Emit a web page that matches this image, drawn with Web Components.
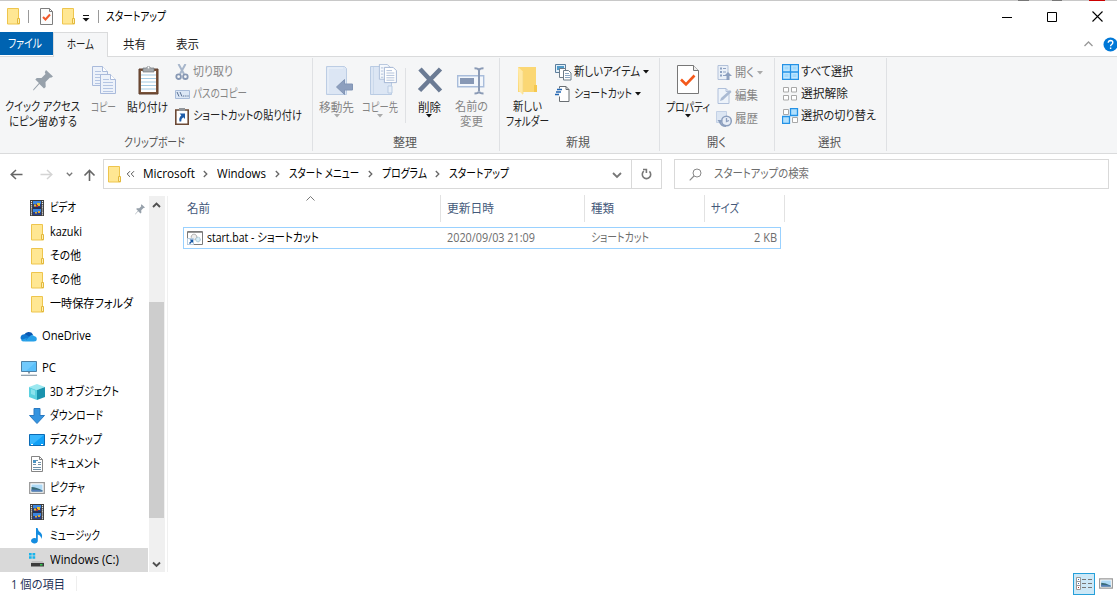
<!DOCTYPE html>
<html lang="ja">
<head>
<meta charset="utf-8">
<title>スタートアップ</title>
<style>
html,body{margin:0;height:100%;overflow:hidden;background:#fff}
body{font:12px "Open Sans","Noto Sans CJK JP",sans-serif;color:#000}
</style>
</head>
<body>
<explorer-window></explorer-window>
<script>
const folder='<path d="M1.500.500h11v11.500h1v4h-12z" fill="#ffe793" stroke="#eec54d"/><path d="M11.500 10.500h2v5h-2z" fill="#fff0b0" stroke="#e3b83c"/>';
const video='<path d="M1 0h14v16H1z" fill="#3a3a3a"/><path d="M4 1h8v14H4z" fill="#27408c"/><path d="M4 1h8v3H4z" fill="#3a86e0"/><path d="M5 4.500h2v2H5zM8 3h3v3H8z" fill="#e6bd2c"/><path d="M7 5h2v2H7z" fill="#b5322c"/><path d="M4 9h8v3H4z" fill="#3a86e0"/><path d="M6 12h2v1.500H6zM9 11h2v2H9z" fill="#d9a93a"/><path d="M4 8h8" stroke="#222"/><path d="M2.500 1v15M13.500 1v15" stroke="#eee" stroke-width="1.200" stroke-dasharray="1.200 .9"/>';
const pin='<path d="M13 0l7 6.500-2 1.200-1-.3-4.500 4.600.2 5-1.700 1.400-4.600-4.300L1 20 0 20.500l.4-1.200 5.500-6.300L2.300 9.500l1.500-1.400 4.700-.1L12.500 4l-.7-1.800z" fill="#97a1ab"/>';
const caret='<path d="M0 0h6L3 3.500z" fill="currentColor"/>';
const sheet=(x,y)=>`<g transform="translate(${x} ${y})"><path d="M.5.500h10l5 5v14H.5z" fill="#edf2fa" stroke="#a9badb"/><path d="M10.500.500v5h5" fill="#fff" stroke="#a9badb"/><path d="M3 5.500h6M3 8.500h10M3 11.500h10M3 14.500h10M3 17.500h10" stroke="#b4c5e3"/></g>`;
/* name: [width, height, markup] */
const ICONS={
folder:[14,17,folder],
video:[16,16,video],
pin:[20,21,pin],
caret:[6,4,caret],
propsmall:[13,17,'<path d="M.5.500h9l3 3v13H.5z" fill="#fcfcfc" stroke="#7e7e7e"/><path d="M9.500.500v3h3" fill="none" stroke="#7e7e7e"/><path d="M3 9l2.500 2.500L10 6.500" fill="none" stroke="#f2592a" stroke-width="2"/>'],
qat:[8,8,'<path d="M1 1.500h6" stroke="#111"/><path d="M.5 4h7L4 7.500z" fill="#111"/>'],
min:[10,10,'<path d="M0 5.500h10" stroke="#000"/>'],
max:[10,10,'<path d="M.5.500h9v9h-9z" fill="none" stroke="#000"/>'],
close:[11,11,'<path d="M.5.500l10 10M10.500.500l-10 10" stroke="#000" stroke-width="1.100"/>'],
up1:[9,6,'<path d="M.5 5l4-4 4 4" fill="none" stroke="#999" stroke-width="1.300"/>'],
copy:[25,29,sheet(0,0)+sheet(8,8)],
paste:[21,30,'<path d="M1 4h19v25H1z" fill="#79533a" stroke="#5f3f2c"/><path d="M3 6h15v21H3z" fill="#fff"/><path d="M3 10h15M3 13.500h15M3 17h15M3 20.500h15M3 24h15" stroke="#a4cbe3"/><path d="M5 3h3.500a2.100 2.100 0 0 1 4 0H16v4H5z" fill="#a5a9ad" stroke="#747a80" stroke-width=".7"/><circle cx="10.500" cy="2.500" r=".9" fill="#fff"/>'],
cut:[14,17,'<path d="M3.500 0l5.500 10M10.500 0L5 10" stroke="#a7b6cb" stroke-width="2"/><circle cx="3.600" cy="12.700" r="2.300" fill="none" stroke="#8798b4" stroke-width="1.800"/><circle cx="10.400" cy="12.700" r="2.300" fill="none" stroke="#8798b4" stroke-width="1.800"/>'],
path:[15,9,'<path d="M.5.500h14v8H.5z" fill="#dce7f5" stroke="#a9bcd9"/><path d="M2 2l2 4.500M5 2l2 4.500M8 6h1.300M10.200 6h1.300M12.400 6h1.300" stroke="#5a7194"/>'],
pasteshort:[14,17,'<path d="M.8 2h12.400v14.200H.8z" fill="#fff" stroke="#6c4935" stroke-width="1.600"/><path d="M4 0h6v3H4z" fill="#90959a"/><path d="M4.500 5.500H10V11L8.300 9.300Q6 10.500 6.200 13.500H4.500Q3.500 10 6.300 7.300z" fill="#1f5ca8"/>'],
move:[28,30,'<path d="M.5.500h18l2 2v26H.5z" fill="#dce6f4" stroke="#bccde4"/><path d="M2 27V2h15" fill="none" stroke="#edf3fa"/><path d="M10.500 21L18.500 13.500v4.500h8v6h-8v4.500z" fill="#8d9fbe" stroke="#8295b5"/>'],
copyto:[28,31,'<path d="M.5 2.500h18l3 3v25H.5z" fill="#dce6f4" stroke="#b9cbe3"/><path d="M3.500 3v27" stroke="#cbd9eb"/><path d="M18 22h4v7h-4z" fill="#e8eff8" stroke="#b9cbe3"/><g transform="translate(9 0) scale(.78)"><path d="M.5.500h10l5 5v14H.5z" fill="#f6f9fd" stroke="#a0b3d2"/><path d="M2.500 5h3M2.500 9h3M2.500 13h3M2.500 17h3" stroke="#9fb2d0"/></g><g transform="translate(14 3) scale(.8)"><path d="M.5.500h11l4 4v15H.5z" fill="#fff" stroke="#93a8cb"/><path d="M3 4.500h7M3 7.500h10M3 10.500h10M3 13.500h10M3 16.500h10" stroke="#9fb2d0"/></g>'],
del:[26,26,'<path d="M3 2l20.500 22M23.500 2L2.500 23.500" stroke="#6b7b94" stroke-width="4.600"/>'],
rename:[29,28,'<path d="M.7 8.700h26v11H.7z" fill="#f3f7fc" stroke="#a9bddb" stroke-width="1.400"/><path d="M3 11h14v6H3z" fill="#8798b5"/><path d="M17.500 1.200q4 0 4.500 2 .5-2 4.500-2M22 3v21M17.500 26.500q4 0 4.500-2 .5 2 4.500 2" fill="none" stroke="#8a9ab5" stroke-width="2"/>'],
newfolder:[21,29,'<path d="M1 1h18v25H1z" fill="#fbd774"/><path d="M17 19h3v7h-3z" fill="#f5c84f"/><path d="M1 1l5 4.500V29l-4-4z" fill="#ffe9a6"/><path d="M6 5.500V28" stroke="#f4d885" stroke-width=".7"/>'],
newitem:[17,17,'<path d="M.5.500h10v8H.5z" fill="#e2f0fa" stroke="#5c7e9c"/><path d="M2 2h7v4H2z" fill="#4f9ac9"/><path d="M4.500 4.500h6v9h-6z" fill="#fff" stroke="#6d7c89"/><path d="M8.500 6.500h5l2.500 2.500v7H8.500z" fill="#fff" stroke="#6d7c89"/><path d="M10 9.500h4M10 11.500h5M10 13.500h5" stroke="#8da9c4"/>'],
newshort:[16,17,'<path d="M4.500 2.500V.500h6.500l3 3v12h-9.500v-5" fill="#fff" stroke="#696e73"/><path d="M11 .5v3h3" fill="none" stroke="#696e73"/><path d="M2 3.500h5M1 6h5M0 8.500h4" stroke="#2265b1" stroke-width="1.300"/>'],
prop:[22,29,'<path d="M.5.500h16l5 5v23H.5z" fill="#fff" stroke="#777"/><path d="M16.500.500v5h5" fill="#eee" stroke="#777"/><path d="M4 14.500l5 5L17.500 10.500" fill="none" stroke="#f4591b" stroke-width="2.600"/>'],
open:[15,16,'<path d="M1 .5h10v14H1z" fill="#eaf0f8" stroke="#b2c1d9"/><path d="M3 2.500h2v2H3zM3 6h2v2H3zM3 9.500h2v2H3z" fill="#8da1c1"/><path d="M6 3.500h3M6 7h3M6 10.500h2" stroke="#8da1c1"/><path d="M11 7l4 4h-2.500v4h-3v-4H7z" fill="#8da0bf"/>'],
edit:[15,16,'<path d="M1 .5h8l3 3v12H1z" fill="#edf3fa" stroke="#b0c0da"/><path d="M9 .5v3h3" fill="none" stroke="#b0c0da"/><path d="M3 13l1-3 9-8 1.500 2-8.500 8z" fill="#a9bad3"/>'],
history:[17,16,'<path d="M.5.500h10v11H.5z" fill="#dce6f3" stroke="#c3d1e6"/><circle cx="10.500" cy="10" r="4.800" fill="#e8eef7" stroke="#8c9fbe" stroke-width="1.500"/><path d="M10.500 7v3.500l2.500-1" fill="none" stroke="#8c9fbe" stroke-width="1.300"/><path d="M1.500 9h5L4 12.500z" fill="#8c9fbe"/><path d="M4 11q1 4 6 4" fill="none" stroke="#8c9fbe" stroke-width="1.800"/>'],
selall:[17,16,'<path d="M.5.500h16v15H.5zM8.500.500v15M.5 8h16" fill="#bfe6ff" stroke="#2492e6" stroke-width="1.300"/><path d="M2.500 2.500h4v3h-4zM10.500 2.500h4v3h-4zM2.500 10h4v3h-4zM10.500 10h4v3h-4z" fill="#a1d9fc"/>'],
selnone:[17,16,'<path d="M1.500 1.500h5v4.500h-5zM9.500 1.500h5v4.500h-5zM1.500 9.500h5v4.500h-5zM9.500 9.500h5v4.500h-5z" fill="#fff" stroke="#a8a8a8"/>'],
selinv:[17,16,'<path d="M1.500 1.500h5v5h-5zM10.500 9.500h5v5h-5z" fill="#fff" stroke="#a8a8a8"/><path d="M8.500.500h7v7h-7zM.5 8.500h7v7h-7z" fill="#b2e0fd" stroke="#2492e6" stroke-width="1.300"/>'],
back:[13,11,'<path d="M12.500 5.500H1.500M6 1L1.200 5.500 6 10" fill="none" stroke="#666" stroke-width="1.500"/>'],
fwd:[13,11,'<path d="M.5 5.500h11M7 1l4.800 4.500L7 10" fill="none" stroke="#d4d4d4" stroke-width="1.500"/>'],
up:[13,12,'<path d="M6.500 12V1.500M1.500 6.500l5-5 5 5" fill="none" stroke="#666" stroke-width="1.600"/>'],
tiny:[7,5,'<path d="M.8.800l2.700 2.700L6.200.800" fill="none" stroke="#777" stroke-width="1.300"/>'],
down:[10,7,'<path d="M1 1l4 4 4-4" fill="none" stroke="#777" stroke-width="1.800"/>'],
sdown:[9,7,'<path d="M1 1.500l3.500 3.500L8 1.500" fill="none" stroke="#505050" stroke-width="1.900"/>'],
sup:[9,7,'<path d="M1 5l3.500-3.500L8 5" fill="none" stroke="#505050" stroke-width="1.900"/>'],
chev:[5,8,'<path d="M.8 1L3.800 4l-3 3" fill="none" stroke="#666" stroke-width="1.300"/>'],
dbl:[9,8,'<path d="M4 1.200L1.200 4 4 6.800M8 1.200L5.200 4 8 6.800" fill="none" stroke="#555"/>'],
refresh:[11,12,'<path d="M2.800 3.200a4.200 4.200 0 1 0 5.600.2M2 1.500h3.400v3.600" fill="none" stroke="#777" stroke-width="1.600"/>'],
search:[13,13,'<circle cx="8" cy="5" r="4" fill="none" stroke="#888"/><path d="M5 8L.7 12.300" stroke="#888" stroke-width="1.100"/>'],
onedrive:[17,16,'<path d="M4 7.200A5 4.800 0 0 1 13 6.500L8 11z" fill="#0a57b0"/><path d="M4.500 13A4 3.400 0 1 1 5.500 6.300l6.500 4.200z" fill="#1079d0"/><path d="M4.500 13.500L10 8q2-2 4 0 2.800.5 2.800 3 0 2.500-3 2.500H4q-2 0-3-1.500l6-2z" fill="#26a0e8"/>'],
pc:[16,16,'<path d="M.5 1.500h15v10H.5z" fill="#5ac0fb" stroke="#4d81a6"/><path d="M1 2h14L5 11H1z" fill="#7acffe" opacity=".7"/><path d="M7 12h2v1.500H7z" fill="#8b9ca9"/><path d="M0 15.300h16" stroke="#8799a7" stroke-width="1.200"/>'],
cube:[16,16,'<path d="M8 0l8 3-8 3-8-3z" fill="#9be8f0"/><path d="M0 3l8 3v10l-8-3z" fill="#5bd1e0"/><path d="M16 3L8 6v10l8-3z" fill="#1a93ae"/><path d="M2 5l4 1.500v5L2 10z" fill="#8be3ed"/>'],
dl:[16,16,'<path d="M5 .5h6v7h4.500L8 15.500.5 7.500H5z" fill="#3494e0" stroke="#2a7ac2"/>'],
desk:[16,16,'<path d="M.5 2.500h15v11H.5z" fill="#10a0f6" stroke="#0b6ab5"/><path d="M1 3h14L4 12H1z" fill="#38b6fd"/><path d="M2 12.500h2M12 12.500h2" stroke="#fff"/>'],
doc:[16,16,'<path d="M2.500.500h8l3 3v12h-11z" fill="#fff" stroke="#858585"/><path d="M10.500.500v3h3" fill="none" stroke="#858585"/><path d="M7 4.500h2M4 8.500h3M9 6.500h3M9 8.500h3M4 11.500h8M4 13.500h8" stroke="#6e91aa"/><path d="M4 4h3v3H4z" fill="#4a94c5"/>'],
pic:[16,16,'<path d="M.7 2.700h14.600v10.600H.7z" fill="#fff" stroke="#999" stroke-width="1.300"/><path d="M2.500 4.500h11v7h-11z" fill="#aed9f5"/><path d="M2.500 7q5 0 11 3.500v1h-11z" fill="#386b75"/><path d="M2.500 9.500q6 0 11 1v1h-11z" fill="#567fbc"/>'],
music:[16,16,'<path d="M7 0h1.500q.5 3 3 4.500 3 3 .5 6.500.6-3-3.200-4.500V12.500A3.400 2.800 0 1 1 7 10.300z" fill="#138ce0"/>'],
drive:[16,16,'<path d="M0 1h2.700v2.500H0zM3.500 1h2.700v2.500H3.500zM0 4.300h2.700v2.500H0zM3.500 4.300h2.700v2.500H3.500z" fill="#17b4ec"/><path d="M3 9h10.500l1.500 2H2z" fill="#c2c2c2"/><path d="M2 11h13v3.500H2z" fill="#3c3c3c"/><path d="M11 12.800h2.500" stroke="#35dd55" stroke-width="1.300"/>'],
bat:[16,14,'<path d="M.5.500h15v13H.5z" fill="#fff" stroke="#7a7a7a"/><path d="M1 1.500h14" stroke="#999"/><circle cx="7" cy="6" r="2.800" fill="#eee" stroke="#999" stroke-dasharray="1.500 .7"/><circle cx="11" cy="8.500" r="2.300" fill="#d7edf7" stroke="#93b8ca" stroke-dasharray="1.200 .6"/><path d="M.5 7.500h6v6h-6z" fill="#fff" stroke="#b7cde0"/><path d="M2.500 8.500H6V12l-1-1-2 2-1-1 2-2z" fill="#1457a6"/>'],
details:[16,13,'<path d="M.5.500h4v12h-4zM.5 4.500h4M.5 8.500h4" fill="#fff" stroke="#999"/><path d="M2 2h1v1H2zM2 6h1v1H2z" fill="#356bb5"/><path d="M2 10h1v1H2z" fill="#b32b2b"/><path d="M6 2.500h4M12 2.500h4M6 6.500h4M12 6.500h4M6 10.500h4M12 10.500h4" stroke="#777"/>'],
help:[15,15,'<circle cx="7.500" cy="7.500" r="7" fill="#0078d7"/><path d="M5.200 5.800q.2-2.300 2.400-2.300 2.200.1 2.200 2 0 1.200-1.200 2-1 .7-1 1.800M7.600 10.500v1.500" fill="none" stroke="#fff" stroke-width="1.400"/>'],
sort:[9,5,'<path d="M.5 4.500l4-4 4 4" fill="none" stroke="#777"/>']
};
class Base extends HTMLElement{
  connectedCallback(){
    if(this.shadowRoot)return;
    const t=document.createElement('template');
    t.innerHTML=this.view();
    this.attachShadow({mode:'open'}).append(document.importNode(t.content,true));
    this.ready?.();
  }
  a(n,d=''){return this.getAttribute(n)??d}
}
const def=(n,c)=>customElements.define(n,c);

/* Text squeezed or stretched horizontally to the width given in "w". */
def('fit-text',class extends Base{
  view(){return `<style>:host{display:block;flex:none;width:${this.a('w')}px;height:16px;line-height:16px;white-space:nowrap}
  span{display:inline-block;transform-origin:0 50%;font-feature-settings:"palt","pkna"}</style><span><slot></slot></span>`}
  ready(){const s=this.shadowRoot.querySelector('span');const n=s.offsetWidth&&s.getBoundingClientRect().width;
    if(n)s.style.transform=`scaleX(${this.a('w')/n})`}
});
def('ui-icon',class extends Base{
  view(){const [w,h,m]=ICONS[this.a('name')];const W=this.a('w',w),H=this.a('h',h);
    return `<style>:host{display:block;flex:none;width:${W}px;height:${H}px}svg{display:block}</style><svg width="${W}" height="${H}" viewBox="0 0 ${w} ${h}">${m}</svg>`}
});
def('title-bar',class extends Base{
  view(){return `<style>:host{display:flex;align-items:center;height:31px;border-top:1px solid #c8c8c8;box-sizing:content-box;position:relative}
  .s{width:1px;height:13px;background:#999}.b{display:flex;width:45px;justify-content:center}
  .e{position:absolute;top:-1px;height:1px}</style>
  <ui-icon name="folder" style="margin-left:6px"></ui-icon><div class="s" style="margin-left:8px"></div>
  <ui-icon name="propsmall" style="margin-left:11px"></ui-icon><ui-icon name="folder" style="margin-left:8px"></ui-icon>
  <ui-icon name="qat" style="margin:3px 0 0 7px"></ui-icon><div class="s" style="margin:0 7px 0 8px"></div>
  <fit-text w="60">スタートアップ</fit-text><div style="flex:1"></div>
  <div class="b"><ui-icon name="min"></ui-icon></div><div class="b"><ui-icon name="max"></ui-icon></div><div class="b" style="width:43px;padding-left:4px;box-sizing:border-box"><ui-icon name="close"></ui-icon></div>
  <i class="e" style="left:1018px;width:11px;background:#777"></i><i class="e" style="left:1052px;width:10px;background:#777"></i><i class="e" style="left:1089px;width:16px;background:#c00"></i>`}
});
def('tab-strip',class extends Base{
  view(){return `<style>:host{display:flex;height:24px;border-bottom:1px solid #dadbdc;color:#222}
  div{display:flex;justify-content:center;align-items:center;box-sizing:border-box;height:24px}
  .f{width:53px;height:23px;background:#0063b1;color:#fff;padding:1px 3px 0 0}.h{width:55px;height:25px;background:#f5f6f7;border:1px solid #dadbdc;border-bottom:0}
  .r{margin-left:auto}</style>
  <div class="f"><fit-text w="34">ファイル</fit-text></div><div class="h"><fit-text w="27">ホーム</fit-text></div>
  <div style="width:53px;padding-top:1px"><fit-text w="23">共有</fit-text></div><div style="width:53px;padding-top:1px"><fit-text w="23">表示</fit-text></div>
  <div class="r"><ui-icon name="up1" style="margin-right:10px"></ui-icon><ui-icon name="help" style="margin-right:-1px"></ui-icon></div>`}
});
/* Large ribbon button: icon above one or two caption lines. */
def('big-button',class extends Base{
  view(){const l=this.a('lines').split('|').map(x=>x.split(':'));
  return `<style>:host{display:flex;flex:none;flex-direction:column;align-items:center;width:${this.a('w')}px;color:${this.hasAttribute('off')?'#858585':'#222'}}
  .i{height:42px;display:flex;align-items:center;margin-left:${this.a('dx',0)}px}fit-text{height:15px;line-height:15px}.i+fit-text{margin-top:${l.length>1?0:1}px}.c{margin-top:-1px;color:${this.hasAttribute('off')?'#aaa':'#111'}}</style>
  <div class="i" style="padding-top:${this.a('dy',3)}px;box-sizing:border-box"><ui-icon name="${this.a('icon')}"></ui-icon></div>
  ${l.map(x=>`<fit-text w="${x[1]}">${x[0]}</fit-text>`).join('')}${this.hasAttribute('menu')?'<ui-icon class="c" name="caret"></ui-icon>':''}`}
});
def('small-button',class extends Base{
  view(){const off=this.hasAttribute('off');return `<style>:host{display:flex;align-items:center;height:22px;color:${off?'#858585':'#222'}}
  .i{width:16px;display:flex;justify-content:center;margin-right:3px}.c{margin-left:3px;color:${off?'#aaa':'#111'}}</style>
  <div class="i"><ui-icon name="${this.a('icon')}"></ui-icon></div><fit-text w="${this.a('w')}">${this.a('label')}</fit-text>${this.hasAttribute('menu')?'<ui-icon class="c" name="caret"></ui-icon>':''}`}
});
def('ribbon-group',class extends Base{
  view(){return `<style>:host{display:flex;flex:none;flex-direction:column;width:${this.a('w')}px;box-sizing:border-box;height:96px;position:relative}
  .c{display:flex;height:78px}.l{display:flex;justify-content:center;color:#555;padding-right:${this.a('pr',0)}px}
  :host::after{content:"";position:absolute;right:0;top:1px;height:93px;width:1px;background:#dfe1e4}</style>
  <div class="c"><slot></slot></div><div class="l"><fit-text w="${this.a('lw')}">${this.a('label')}</fit-text></div>`}
});
def('ribbon-bar',class extends Base{
  view(){return `<style>:host{display:flex;height:96px;background:#f5f6f7;border-bottom:1px solid #dadbdc}
  .col{display:flex;flex-direction:column;padding-top:4px}.v{width:1px;height:55px;margin:11px 0 0 5px;background:#dfe1e4}</style>
  <ribbon-group w="313" label="クリップボード" lw="61" pr="4">
    <big-button w="85" icon="pin" dy="5" lines="クイック アクセス:75|にピン留めする:68"></big-button>
    <big-button w="36" icon="copy" dy="4" dx="2" off lines="コピー:25"></big-button>
    <big-button w="53" icon="paste" dx="1" lines="貼り付け:41"></big-button>
    <div class="col"><small-button icon="cut" off label="切り取り" w="40"></small-button><small-button icon="path" off label="パスのコピー" w="54"></small-button><small-button icon="pasteshort" label="ショートカットの貼り付け" w="109"></small-button></div>
  </ribbon-group>
  <ribbon-group w="187" label="整理" lw="24" pr="4">
    <big-button w="47" dx="7" icon="move" dy="5" off menu lines="移動先:35"></big-button><big-button w="39" dx="8" icon="copyto" off menu lines="コピー先:36"></big-button>
    <div class="v" style="margin-left:6px"></div><big-button w="46" icon="del" dy="4" menu dx="2" lines="削除:23"></big-button><big-button w="38" icon="rename" dy="5" dx="1" off lines="名前の:33|変更:23"></big-button>
  </ribbon-group>
  <ribbon-group w="160" label="新規" lw="24" pr="5">
    <big-button w="54" icon="newfolder" dy="5" lines="新しい:29|フォルダー:43"></big-button>
    <div class="col" style="padding-left:1px"><small-button icon="newitem" label="新しいアイテム" w="66" menu></small-button><small-button icon="newshort" label="ショートカット" w="58" menu></small-button></div>
  </ribbon-group>
  <ribbon-group w="115" label="開く" lw="19" pr="3">
    <big-button w="56" icon="prop" dy="3" menu lines="プロパティ:44"></big-button>
    <div class="col" style="padding:5px 0 0 0;gap:1px"><small-button icon="open" off menu label="開く" w="19"></small-button><small-button icon="edit" off label="編集" w="23"></small-button><small-button icon="history" off label="履歴" w="23"></small-button></div>
  </ribbon-group>
  <ribbon-group w="112" label="選択" lw="23" pr="4">
    <div class="col" style="padding-left:7px"><small-button icon="selall" label="すべて選択" w="52"></small-button><small-button icon="selnone" label="選択解除" w="47"></small-button><small-button icon="selinv" label="選択の切り替え" w="75"></small-button></div>
  </ribbon-group>`}
});
def('address-bar',class extends Base{
  view(){return `<style>:host{display:flex;align-items:center;height:40px;padding-left:10px}
  .b,.q{display:flex;align-items:center;box-sizing:border-box;height:30px;border:1px solid #d9d9d9}.b{width:559px;margin-left:7px}.q{width:435px;margin-left:12px;padding-left:14px;color:#6d6d6d}
  .r{width:30px;height:28px;box-sizing:border-box;border-left:1px solid #d9d9d9;display:flex;align-items:center;justify-content:center}</style>
  <ui-icon name="back"></ui-icon><ui-icon name="fwd" style="margin-left:17px"></ui-icon><ui-icon name="tiny" style="margin-left:13px"></ui-icon><ui-icon name="up" style="margin:2px 0 0 10px"></ui-icon>
  <div class="b"><ui-icon name="folder" style="margin-left:3px"></ui-icon><ui-icon name="dbl" style="margin-left:5px"></ui-icon>
  <fit-text w="52" style="margin-left:8px">Microsoft</fit-text><ui-icon name="chev" style="margin:0 9px 0 8px"></ui-icon>
  <fit-text w="49">Windows</fit-text><ui-icon name="chev" style="margin:0 9px 0 9px"></ui-icon>
  <fit-text w="70">スタート メニュー</fit-text><ui-icon name="chev" style="margin:0 9px 0 9px"></ui-icon>
  <fit-text w="45">プログラム</fit-text><ui-icon name="chev" style="margin:0 9px 0 8px"></ui-icon>
  <fit-text w="60">スタートアップ</fit-text><ui-icon name="down" style="margin:2px 9px 0 auto"></ui-icon><div class="r"><ui-icon name="refresh"></ui-icon></div></div>
  <div class="q"><ui-icon name="search"></ui-icon><fit-text w="95" style="margin-left:12px">スタートアップの検索</fit-text></div>`}
});
def('tree-item',class extends Base{
  view(){return `<style>:host{display:flex;align-items:center;height:24px;padding-left:${this.a('x',29)}px}:host([sel]){background:#d9d9d9}fit-text{margin-left:5px}.p{margin:2px 3px 0 auto}</style>
  <ui-icon name="${this.a('icon')}"${this.a('icon')=='folder'?' style="margin:0 1px"':''}></ui-icon><fit-text w="${this.a('w')}">${this.a('label')}</fit-text>${this.hasAttribute('pinned')?'<ui-icon class="p" name="pin" w="10" h="11"></ui-icon>':''}`}
});
def('nav-tree',class extends Base{
  view(){const it=[['video','ビデオ',26,' pinned'],['folder','kazuki',32,''],['folder','その他',31,''],['folder','その他',31,''],['folder','一時保存フォルダ',83,''],['onedrive','OneDrive',49,' x="20" style="margin:8px 0"'],['pc','PC',14,' x="21"'],['cube','3D オブジェクト',69,''],['dl','ダウンロード',53,''],['desk','デスクトップ',52,''],['doc','ドキュメント',50,''],['pic','ピクチャ',35,''],['video','ビデオ',26,''],['music','ミュージック',50,''],['drive','Windows (C:)',69,' sel']];
  return `<style>:host{display:flex;width:167px;height:376px;border-right:1px solid #f0f0f0}.t{width:148px}
  .s{width:16px;margin-left:1px;background:#f0f0f0;display:flex;flex-direction:column;align-items:center;justify-content:space-between;padding:6px 0 4px;box-sizing:border-box}
  .th{width:15px;height:216px;background:#cdcdcd;margin:93px 1px 0 0;flex:none}</style>
  <div class="t">${it.map(i=>`<tree-item icon="${i[0]}" label="${i[1]}" w="${i[2]}"${i[3]}></tree-item>`).join('')}</div>
  <div class="s"><ui-icon name="sup" style="margin-right:1px"></ui-icon><div class="th"></div><ui-icon name="sdown" style="margin:auto 1px 0 0"></ui-icon></div>`}
});
def('file-list',class extends Base{
  view(){return `<style>:host{display:block;flex:1;padding-left:15px;margin-top:-1px}
  .g{display:grid;grid-template-columns:258px 144px 120px 80px;align-items:center;width:602px}
  .h{height:27px;color:#44597a}.h>div{display:flex;align-items:center;height:27px;border-right:1px solid #e2e2e2;padding:1px 0 0 6px;box-sizing:border-box;position:relative}
  .h>div:first-child{padding-left:4px}.h ui-icon{position:absolute;left:123px;top:1px}
  .r{margin-top:5px;width:598px;height:22px;border:1px solid #99d1ff;box-sizing:border-box;color:#6d6d6d;grid-template-columns:257px 144px 120px 75px}
  .r>div{display:flex;align-items:center;padding-left:6px}</style>
  <div class="g h"><div><fit-text w="23">名前</fit-text><ui-icon name="sort"></ui-icon></div><div><fit-text w="47">更新日時</fit-text></div><div><fit-text w="23">種類</fit-text></div><div><fit-text w="28">サイズ</fit-text></div></div>
  <div class="g r"><div style="color:#000;padding-left:3px"><ui-icon name="bat"></ui-icon><fit-text w="112" style="margin-left:4px">start.bat - ショートカット</fit-text></div><div><fit-text w="88">2020/09/03 21:09</fit-text></div><div><fit-text w="58">ショートカット</fit-text></div><div style="justify-content:flex-end;padding-right:3px"><fit-text w="23">2 KB</fit-text></div></div>`}
});
def('status-bar',class extends Base{
  view(){return `<style>:host{display:flex;align-items:center;height:23px;padding-left:11px;color:#1f3357}
  .s{width:1px;height:15px;background:#eee;margin-left:11px}.b{margin-left:auto;width:22px;height:22px;box-sizing:border-box;border:1px solid #26a0da;background:#cce8f7;display:flex;align-items:center;justify-content:center}</style>
  <fit-text w="54" style="margin-top:2px">1 個の項目</fit-text><div class="s"></div><div class="b"><ui-icon name="details"></ui-icon></div><ui-icon name="pic" w="14" h="15" style="margin:0 4px 0 4px"></ui-icon>`}
});
def('explorer-window',class extends Base{
  view(){return `<style>:host{display:flex;flex-direction:column;width:1117px;height:595px;background:#fff;overflow:hidden}.m{display:flex;height:376px;margin-top:2px}</style>
  <title-bar></title-bar><tab-strip></tab-strip><ribbon-bar></ribbon-bar><address-bar></address-bar>
  <div class="m"><nav-tree></nav-tree><file-list></file-list></div><status-bar></status-bar>`}
});
</script>
</body>
</html>
